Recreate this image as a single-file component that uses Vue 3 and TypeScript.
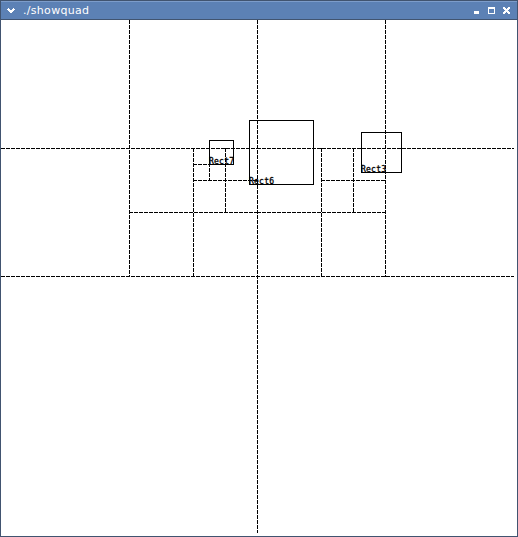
<script setup lang="ts">
interface QuadNode {
  x: number
  y: number
  size: number
}

interface Shape extends QuadNode {
  label: string
}

interface Segment {
  x1: number
  y1: number
  x2: number
  y2: number
}

// Nodes of the quadtree that have been split into four children.
const splitNodes: QuadNode[] = [
  { x: 0, y: 0, size: 512 },
  { x: 0, y: 0, size: 256 },
  { x: 256, y: 0, size: 256 },
  { x: 128, y: 128, size: 128 },
  { x: 256, y: 128, size: 128 },
  { x: 192, y: 128, size: 64 },
  { x: 320, y: 128, size: 64 },
  { x: 192, y: 128, size: 32 },
]

const shapes: Shape[] = [
  { label: 'Rect7', x: 208, y: 120, size: 24 },
  { label: 'Rect6', x: 248, y: 100, size: 64 },
  { label: 'Rect3', x: 360, y: 112, size: 40 },
]

// Segments include their end pixel, hence the extra unit of length.
const segments: Segment[] = splitNodes.flatMap(({ x, y, size }) => {
  const half = size / 2
  return [
    { x1: x, y1: y + half + 0.5, x2: x + size + 1, y2: y + half + 0.5 },
    { x1: x + half + 0.5, y1: y, x2: x + half + 0.5, y2: y + size + 1 },
  ]
})
</script>

<template>
  <div class="window">
    <header class="titlebar">
      <svg class="menu" width="8" height="6" viewBox="0 0 8 6" shape-rendering="crispEdges">
        <path d="M0 1h1v-1h1v1h1v1h2v-1h1v-1h1v1h1v1h-1v1h-1v1h-1v1h-2v-1h-1v-1h-1v-1h-1z" />
      </svg>
      <span class="title">./showquad</span>
      <div class="buttons">
        <svg width="7" height="7" viewBox="0 0 7 7" shape-rendering="crispEdges">
          <path d="M1 4h5v3h-5z" />
        </svg>
        <svg width="7" height="7" viewBox="0 0 7 7" shape-rendering="crispEdges">
          <path fill-rule="evenodd" d="M0 0h7v7h-7zM1 2v4h5v-4z" />
        </svg>
        <svg width="7" height="7" viewBox="0 0 7 7" shape-rendering="crispEdges">
          <path d="M0 0h2v1h1v1h1v-1h1v-1h2v2h-1v1h-1v1h1v1h1v2h-2v-1h-1v-1h-1v1h-1v1h-2v-2h1v-1h1v-1h-1v-1h-1z" />
        </svg>
      </div>
    </header>
    <svg class="canvas" width="516" height="516" viewBox="0 0 516 516">
      <g class="grid">
        <line v-for="(s, i) in segments" :key="i" :x1="s.x1" :y1="s.y1" :x2="s.x2" :y2="s.y2" />
      </g>
      <g v-for="shape in shapes" :key="shape.label">
        <rect
          class="shape"
          :x="shape.x + 0.5"
          :y="shape.y + 0.5"
          :width="shape.size"
          :height="shape.size"
        />
        <text class="label" :x="shape.x" :y="shape.y + shape.size" textLength="25">{{ shape.label }}</text>
      </g>
    </svg>
  </div>
</template>

<style>
body {
  margin: 0;
}
</style>

<style scoped>
.window {
  box-sizing: border-box;
  width: 518px;
  height: 537px;
  border: 1px solid #415470;
  background: #fff;
  overflow: hidden;
}

.titlebar {
  box-sizing: border-box;
  display: flex;
  align-items: center;
  height: 19px;
  padding: 0 7px 0 6px;
  border-top: 1px solid #7c9cca;
  border-bottom: 1px solid #415470;
  background: #5c81b5;
}

.titlebar svg {
  display: block;
  fill: #fff;
}

.title {
  flex: 1;
  margin-left: 8px;
  color: #fff;
  font: 11px/17px "DejaVu Sans", sans-serif;
  letter-spacing: 0.3px;
}

.buttons {
  display: flex;
  gap: 8px;
}

.canvas {
  display: block;
}

.grid line {
  stroke: #000;
  stroke-width: 1;
  stroke-dasharray: 4 1;
}

.shape {
  fill: none;
  stroke: #000;
}

.label {
  font: 8px "DejaVu Sans Mono", monospace;
  stroke: #000;
  stroke-width: 0.3px;
}
</style>
